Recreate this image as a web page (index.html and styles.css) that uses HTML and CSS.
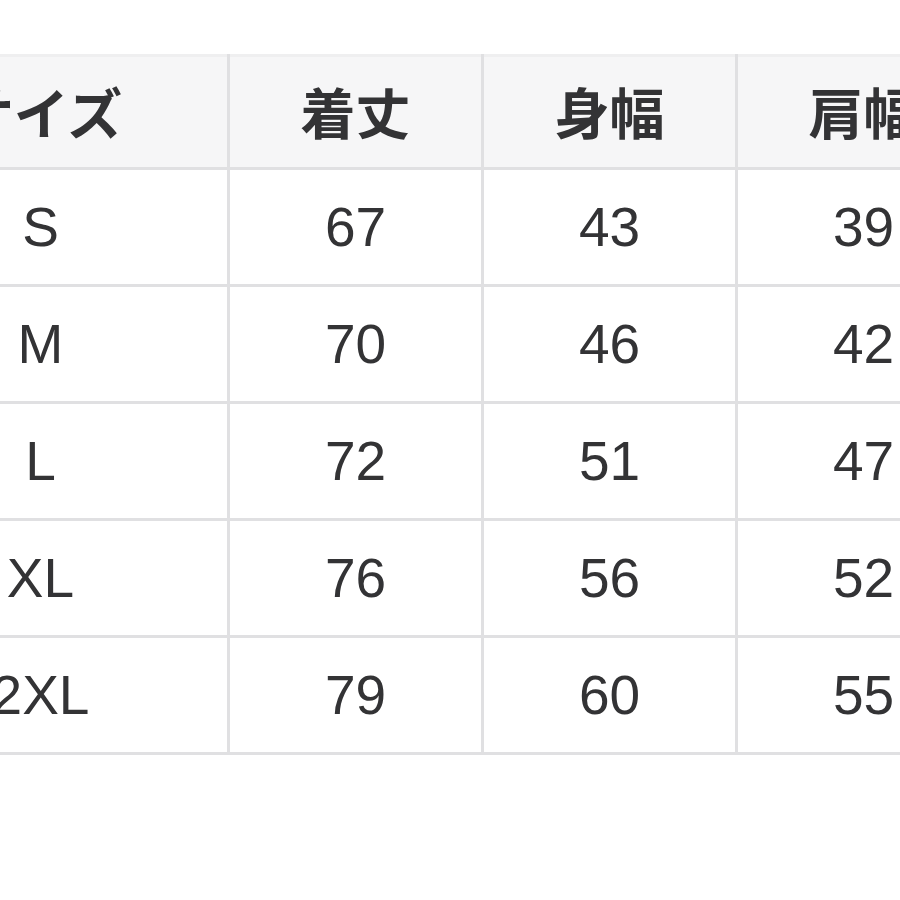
FILE: index.html
```html
<!DOCTYPE html>
<html lang="ja">
<head>
<meta charset="utf-8">
<title>サイズ表</title>
<link rel="stylesheet" href="styles.css">
</head>
<body>
<div class="page">
<table class="size-table">
  <colgroup>
    <col class="col-size">
    <col class="col-val">
    <col class="col-val">
    <col class="col-val">
  </colgroup>
  <thead>
    <tr class="head-row">
      <th>サイズ</th><th>着丈</th><th>身幅</th><th>肩幅</th>
    </tr>
  </thead>
  <tbody>
    <tr><td>S</td><td>67</td><td>43</td><td>39</td></tr>
    <tr><td>M</td><td>70</td><td>46</td><td>42</td></tr>
    <tr><td>L</td><td>72</td><td>51</td><td>47</td></tr>
    <tr><td>XL</td><td>76</td><td>56</td><td>52</td></tr>
    <tr><td>2XL</td><td>79</td><td>60</td><td>55</td></tr>
  </tbody>
</table>
</div>
</body>
</html>
```
FILE: styles.css
```css
html, body {
  margin: 0;
  padding: 0;
  background: #ffffff;
}
.page {
  width: 900px;
  height: 900px;
  overflow: hidden;
  padding-top: 54px;
  box-sizing: border-box;
}
.size-table {
  border-collapse: collapse;
  table-layout: fixed;
  width: 1138px;
  margin-left: -149px;
  color: #333335;
}
.col-size { width: 376px; }
.col-val { width: 254px; }
.size-table th,
.size-table td {
  border: 3px solid #e0e0e2;
  text-align: center;
  vertical-align: middle;
  padding: 0;
}
.size-table th {
  height: 106px;
  padding-bottom: 4px;
  background: #f6f6f7;
  font-family: "Noto Sans CJK JP", "Noto Sans", sans-serif;
  font-weight: 700;
  font-size: 55px;
  line-height: 1;
  border-top-color: #efeff0;
}
.size-table td {
  height: 114px;
  font-family: "Liberation Sans", Arial, sans-serif;
  font-size: 55px;
  line-height: 1;
}
```
